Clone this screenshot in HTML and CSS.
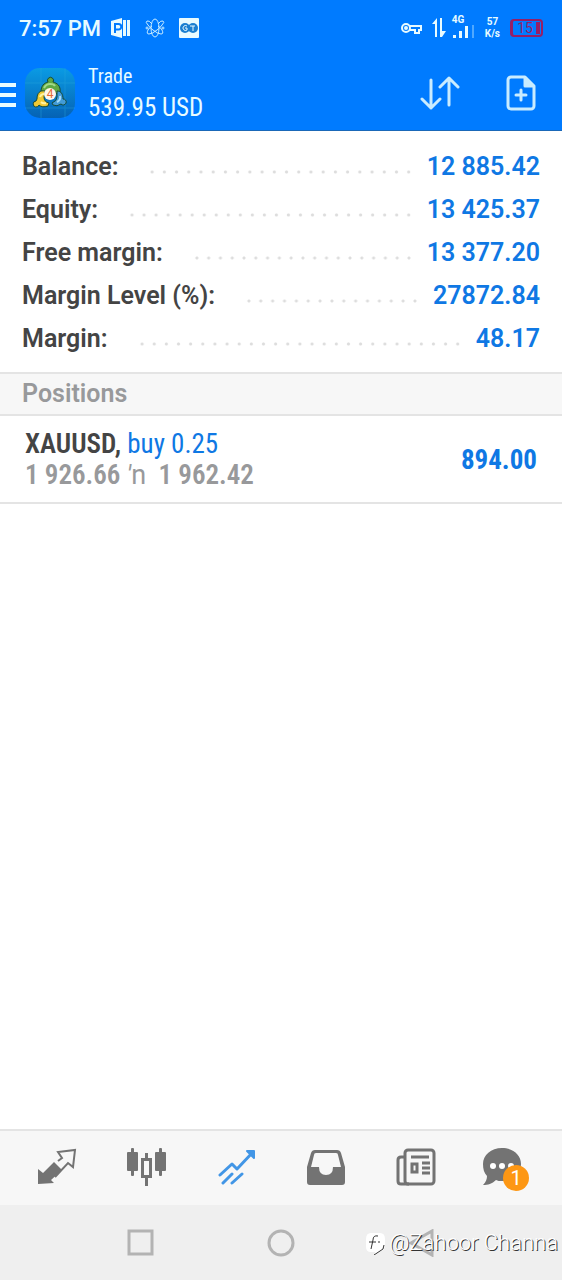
FILE: index.html
```
<!DOCTYPE html>
<html lang="en">
<head>
    <meta charset="UTF-8">
    <meta name="viewport" content="width=device-width, initial-scale=1">
    <title>Trade</title>
    <link rel="stylesheet" href="styles.css">
</head>
<body>
    <header class="top">
        <!-- Phone status bar -->
        <div class="status">
            <span class="clock">7:57 PM</span>
            <svg class="status-icon" width="20" height="20" viewBox="0 0 20 20">
                <path d="M0 3L11 0v20L0 17z" fill="#e8fbff"/>
                <path d="M4 15V6h3.500a2.500 2.500 0 0 1 0 5.500H4" fill="none" stroke="#007bff" stroke-width="2"/>
                <path d="M12 2h3v16h-3zM16 2h3v16h-3z" fill="#e8fbff"/>
            </svg>
            <svg class="status-icon" width="20" height="20" viewBox="0 0 20 20" fill="none" stroke="#c9ecff" stroke-width="1">
                <ellipse cx="10" cy="10" rx="4" ry="9"/>
                <path d="M7 6Q4 2 2 3t1 4q2 3 5 5 5 4 8 4t1-4q-1-2-4-4"/>
                <path d="M13 6q3-4 5-3t-1 4q-2 3-5 5-5 4-8 4t-1-4q1-2 4-4"/>
                <circle cx="2" cy="10" r="1"/>
                <circle cx="18" cy="10" r="1"/>
            </svg>
            <svg class="status-icon" width="20" height="20" viewBox="0 0 20 20">
                <rect width="20" height="20" rx="1" fill="#e8fbff"/>
                <circle cx="6" cy="10" r="5" fill="#1a7fd0"/>
                <circle cx="14" cy="10" r="5" fill="#1a7fd0"/>
                <path d="M8 8a2.500 2.500 0 1 0 0 4v-2H6M11 8h5M14 8v5" fill="none" stroke="#e8fbff"/>
            </svg>
            <div class="signals">
                <svg width="21" height="12" viewBox="0 0 21 12" fill="none" stroke="#e8fbff" stroke-width="2">
                    <circle cx="5" cy="6" r="4"/>
                    <circle cx="5" cy="6" r="1"/>
                    <path d="M9 4h11v4h-2v3h-4V8H9"/>
                </svg>
                <svg width="14" height="20" viewBox="0 0 14 20" fill="#e8fbff">
                    <path d="M5 0v19H3V6H0zM8 0h2v13h4l-4 6H8z"/>
                </svg>
                <div class="network">
                    <span>4G</span>
                    <svg width="23" height="13" viewBox="0 0 23 13" fill="#e8fbff">
                        <rect x="1" y="10" width="3" height="3"/>
                        <rect x="7" y="6" width="3" height="7"/>
                        <rect x="13" y="1" width="3" height="12"/>
                        <rect x="20" y="0" width="2" height="13" fill="#4fa8ff"/>
                    </svg>
                </div>
                <div class="speed">57<br>K/s</div>
                <div class="battery">
                    <span>15</span>
                </div>
            </div>
        </div>

        <!-- App bar -->
        <div class="app-bar">
            <button class="menu" aria-label="Menu"><span></span><span></span><span></span></button>
            <svg class="logo" width="50" height="50" viewBox="0 0 50 50">
                <defs>
                    <linearGradient id="logo-bg" x1="0" y1="0" x2="0" y2="1">
                        <stop offset="0" stop-color="#0a9be4"/>
                        <stop offset="1" stop-color="#0562b4"/>
                    </linearGradient>
                </defs>
                <rect width="50" height="50" rx="15" fill="url(#logo-bg)"/>
                <path d="M0 15h50M0 40h50M16 0v50M40 0v50" stroke="#2aa8dc" stroke-width="1" opacity=".4"/>
                <g stroke="#174b35" stroke-width="1">
                    <path d="M16 24c0-6 3-9 7-10a3 3 0 1 1 5 0c4 1 8 4 7 10l-4 2q-1-5-6-5t-5 5z" fill="#5fa843"/>
                    <path d="M19 20q2-4 6-4t5 2" fill="none" stroke="#a4d98a" stroke-width="2"/>
                    <path d="M12 31c0-6 3-9 8-8l-1 6q0 5 5 6l-1 3q-6 2-9-1a3 3 0 1 1-3-4z" fill="#efc935"/>
                    <path d="M15 29q1-3 4-3M16 34q2 2 5 1" fill="none" stroke="#fff3a0" stroke-width="2"/>
                    <path d="M38 31c0-5-2-8-6-8l0 6q0 4-5 6l1 2q4 2 8-1a3 3 0 1 0 2-5z" fill="#429bd8"/>
                    <path d="M35 28q1 4-3 6" fill="none" stroke="#a6dcfa" stroke-width="2"/>
                </g>
                <circle cx="25" cy="26" r="6" fill="#fff6e9"/>
                <text class="logo-text" x="25" y="30" text-anchor="middle">4</text>
            </svg>
            <div class="title">
                <h1>Trade</h1>
                <p>539.95 USD</p>
            </div>
            <button class="icon-button" aria-label="Sort">
                <svg width="40" height="34" viewBox="0 0 40 34" fill="none" stroke="#c9ecff" stroke-width="3" stroke-linecap="round" stroke-linejoin="round">
                    <path d="M11 4v28M2 23l9 9 9-9M29 29V2M20 11l9-9 9 9"/>
                </svg>
            </button>
            <button class="icon-button" aria-label="New order">
                <svg width="30" height="36" viewBox="0 0 30 36" fill="none" stroke="#c9ecff" stroke-width="3" stroke-linecap="round" stroke-linejoin="round">
                    <path d="M5 2h14l9 9v20a3 3 0 0 1-3 3H5a3 3 0 0 1-3-3V5a3 3 0 0 1 3-3z"/>
                    <path d="M19 3v8h8z" fill="#c9ecff"/>
                    <path d="M15 15v10M10 20h10"/>
                </svg>
            </button>
        </div>
    </header>

    <main>
        <dl class="account">
            <div class="row"><dt>Balance:</dt><dd>12 885.42</dd></div>
            <div class="row"><dt>Equity:</dt><dd>13 425.37</dd></div>
            <div class="row"><dt>Free margin:</dt><dd>13 377.20</dd></div>
            <div class="row"><dt>Margin Level (%):</dt><dd>27872.84</dd></div>
            <div class="row"><dt>Margin:</dt><dd>48.17</dd></div>
        </dl>

        <h2 class="section-title">Positions</h2>
        <div class="position">
            <div>
                <p class="symbol">XAUUSD, <span class="side">buy 0.25</span></p>
                <p class="prices">1 926.66 <span class="mark"><i>′</i>n</span>&nbsp; 1 962.42</p>
            </div>
            <span class="profit">894.00</span>
        </div>
    </main>

    <nav class="tabs">
        <a href="#quotes" aria-label="Quotes">
            <svg width="40" height="38" viewBox="0 0 40 38">
                <path d="M1 36V21l5 4 11-11 8 8-11 10 3 3z" fill="#737373"/>
                <path d="M21 13l4-3-4-6 17-2-2 17-5-4-13 14" fill="none" stroke="#737373" stroke-width="2"/>
            </svg>
        </a>
        <a href="#charts" aria-label="Charts">
            <svg width="40" height="38" viewBox="0 0 40 38" fill="#737373">
                <rect y="4" width="11" height="19" rx="1"/>
                <rect x="4" width="3" height="28" rx="1"/>
                <rect x="28" y="4" width="11" height="19" rx="1"/>
                <rect x="32" width="3" height="28" rx="1"/>
                <path d="M18 5h3v5h4v20h-4v8h-3v-8h-4V10h4zM17 13v14h5V13z" fill-rule="evenodd"/>
            </svg>
        </a>
        <a href="#trade" aria-label="Trade">
            <svg width="38" height="38" viewBox="0 0 38 38" fill="none" stroke="#4296e6" stroke-width="3" stroke-linecap="round" stroke-linejoin="round">
                <path d="M2 27l12-11 5 5L35 4M5 35l9-9M14 35l10-9"/>
                <path d="M29 3h7v7z" fill="#4296e6" stroke-width="2"/>
            </svg>
        </a>
        <a href="#history" aria-label="History">
            <svg width="38" height="35" viewBox="0 0 38 35">
                <path d="M8 0h22q3 0 4 3l4 14v15q0 3-3 3H3q-3 0-3-3V17L4 3q1-3 4-3zm1 3q-2 0-2 2L4 17h8q0 8 7 8t7-8h8L31 5q0-2-2-2z" fill="#737373" fill-rule="evenodd"/>
            </svg>
        </a>
        <a href="#news" aria-label="News">
            <svg width="40" height="38" viewBox="0 0 40 38" fill="none" stroke="#737373" stroke-width="3">
                <rect x="9" y="2" width="29" height="34" rx="3"/>
                <path d="M9 9H5q-3 0-3 3v21q0 3 3 3h8M15 9h18M26 15h8M26 20h8M26 25h8"/>
                <rect x="16" y="16" width="5" height="8"/>
            </svg>
        </a>
        <a class="messages" href="#messages" aria-label="Messages">
            <svg width="46" height="38" viewBox="0 0 46 38">
                <path d="M19 0c11 0 19 7 19 16s-8 17-19 17c-3 0-4 0-6-1-4 4-8 5-13 5 3-3 4-6 4-9-3-3-4-7-4-12C0 7 8 0 19 0z" fill="#737373"/>
                <g fill="#fff"><circle cx="10" cy="18" r="3"/><circle cx="19" cy="18" r="3"/><circle cx="28" cy="18" r="3"/></g>
            </svg>
            <span class="badge">1</span>
        </a>
    </nav>

    <!-- Phone navigation buttons -->
    <footer class="system">
        <button aria-label="Recent apps"><svg width="28" height="28" viewBox="0 0 28 28"><rect x="2" y="2" width="23" height="23"/></svg></button>
        <button aria-label="Home"><svg width="28" height="28" viewBox="0 0 28 28"><circle cx="14" cy="14" r="12"/></svg></button>
        <button aria-label="Back"><svg width="28" height="28" viewBox="0 0 28 28"><path d="M25 2v24L4 14z"/></svg></button>
        <div class="watermark">
            <svg width="21" height="24" viewBox="0 0 21 24">
                <path d="M6 2h9q5 0 5 6v6q0 5-4 6l-6 4v-3H6q-5 0-5-5V8q0-6 5-6z" fill="#fff"/>
                <path d="M13 5q-5-1-5 4l-2 9M4 11h7M14 10v2M19 14q0 5-4 6l-6 4" fill="none" stroke="#333" stroke-width="1"/>
            </svg>
            <span>@Zahoor Channa</span>
        </div>
    </footer>
</body>
</html>
```

FILE: styles.css
```
* {
    box-sizing: border-box;
}

body {
    margin: 0;
    min-height: 100vh;
    display: flex;
    flex-direction: column;
    background-color: #fff;
    color: #444;
    font-family: Roboto, sans-serif;
}

h1, h2, p, dl, dd {
    margin: 0;
}

button {
    padding: 0;
    border: none;
    background: none;
    cursor: pointer;
}

svg {
    display: block;
    flex: none;
}

/* Blue header */
.top {
    background-color: #007bff;
    border-bottom: 1px solid #1a68b8;
    color: #e8fbff;
}

.status {
    display: flex;
    align-items: center;
    height: 56px;
    padding: 0 19px;
}

.clock {
    font-size: 22px;
    font-weight: 500;
    margin-right: 10px;
}

.status-icon {
    margin-right: 14px;
}

.signals {
    display: flex;
    align-items: center;
    gap: 10px;
    margin-left: auto;
}

.network {
    margin: 0 0 4px -4px;
    font-size: 10px;
    line-height: 10px;
    font-weight: 700;
}

.speed {
    font-size: 10px;
    line-height: 12px;
    font-weight: 700;
    text-align: center;
}

.battery {
    display: flex;
    justify-content: flex-end;
    gap: 3px;
    width: 33px;
    height: 18px;
    padding: 1px;
    border: 2px solid #961f66;
    border-left-width: 3px;
    border-radius: 4px;
    color: #961f66;
    font-size: 14px;
    line-height: 12px;
}

.battery::after {
    content: "";
    width: 4px;
    background-color: #961f66;
}

.app-bar {
    display: flex;
    align-items: center;
    height: 74px;
    padding-right: 26px;
}

.menu {
    width: 16px;
    display: flex;
    flex-direction: column;
    gap: 6px;
    padding-top: 3px;
}

.menu span {
    height: 4px;
    background-color: #e8fbff;
}

.logo {
    margin-left: 9px;
}

.logo-text {
    fill: #e56b35;
    font-size: 12px;
}

.title {
    flex: 1;
    margin-left: 13px;
    font-family: "Roboto Condensed", Roboto, sans-serif;
}

.title h1 {
    font-size: 20px;
    line-height: 30px;
    font-weight: 400;
}

.title p {
    font-size: 25px;
    line-height: 34px;
}

.icon-button {
    margin-left: 46px;
}

/* Account summary */
.account {
    padding: 14px 22px 12px;
}

.row {
    display: flex;
    align-items: center;
    height: 43px;
    font-size: 25px;
    font-weight: 600;
}

/* Dotted leader between the label and its value */
.row::before {
    content: "";
    order: 1;
    flex: 1;
    height: 4px;
    margin: 10px 12px 0 28px;
    background: radial-gradient(circle, #ddd 1px, transparent 2px) 0 0 / 12px 4px round;
}

.row dd {
    order: 2;
    color: #0f78e4;
}

.section-title {
    padding: 0 22px;
    border: solid #e4e4e4;
    border-width: 2px 0;
    background-color: #f7f7f7;
    color: #98999b;
    font-size: 25px;
    line-height: 40px;
    font-weight: 600;
}

.position {
    display: flex;
    align-items: center;
    justify-content: space-between;
    padding: 13px 25px 11px;
    border-bottom: 2px solid #e4e4e4;
    font-family: "Roboto Condensed", Roboto, sans-serif;
    font-size: 27px;
    line-height: 31px;
    font-weight: 600;
}

.side {
    color: #0f78e4;
    font-weight: 400;
}

.prices {
    color: #98999b;
}

.mark {
    font-family: Roboto, sans-serif;
    font-weight: 400;
}

.profit {
    color: #0f78e4;
    font-weight: 700;
}

/* Bottom tabs */
.tabs {
    display: grid;
    grid-template-columns: repeat(6, 1fr);
    place-items: center;
    height: 76px;
    margin-top: auto;
    padding: 0 11px 2px 12px;
    border-top: 2px solid #e4e4e4;
    background-color: #f7f7f7;
}

.messages {
    position: relative;
}

.badge {
    position: absolute;
    right: 0;
    bottom: -5px;
    width: 26px;
    height: 26px;
    border-radius: 50%;
    background-color: #fd9714;
    color: #fff;
    font-size: 20px;
    line-height: 26px;
    text-align: center;
}

.system {
    position: relative;
    display: flex;
    justify-content: space-between;
    align-items: center;
    height: 75px;
    padding: 0 127px;
    background-color: #efefef;
}

.system button svg {
    fill: none;
    stroke: #b3b3b3;
    stroke-width: 3;
}

/* Author mark laid over the buttons */
.watermark {
    position: absolute;
    right: 4px;
    bottom: 24px;
    display: flex;
    align-items: center;
    gap: 3px;
    color: #fff;
    font-size: 22px;
    line-height: 26px;
    font-weight: 300;
    text-shadow: 1px 1px 0 #333;
}
```
